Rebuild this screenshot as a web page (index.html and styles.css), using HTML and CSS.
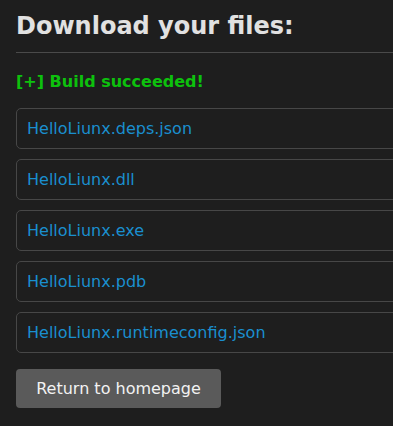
FILE: index.html
```html
<!DOCTYPE html>
<html>
<head>
<meta charset="utf-8">
<link rel="stylesheet" href="styles.css">
</head>
<body>
<main class="page">
  <h1 class="title">Download your files:</h1>
  <hr class="rule">
  <p class="status">[+] Build succeeded!</p>
  <ul class="files">
    <li class="file"><a class="file-link" href="#">HelloLiunx.deps.json</a></li>
    <li class="file"><a class="file-link" href="#">HelloLiunx.dll</a></li>
    <li class="file"><a class="file-link" href="#">HelloLiunx.exe</a></li>
    <li class="file"><a class="file-link" href="#">HelloLiunx.pdb</a></li>
    <li class="file"><a class="file-link" href="#">HelloLiunx.runtimeconfig.json</a></li>
  </ul>
  <button class="home-btn">Return to homepage</button>
</main>
</body>
</html>
```

FILE: styles.css
```css
html, body {
  margin: 0;
  padding: 0;
  background: #1e1e1e;
  overflow: hidden;
}
body {
  font-family: "DejaVu Sans", "Liberation Sans", sans-serif;
  color: #e0e0e0;
}
.page {
  padding: 12px 0 0 16px;
  width: 400px;
}
.title {
  margin: 0;
  font-size: 24px;
  font-weight: bold;
  line-height: 28px;
  color: #e1e1e1;
}
.rule {
  margin: 12px 0 0 0;
  border: 0;
  border-top: 1px solid #4a4a4a;
  height: 0;
}
.status {
  margin: 19px 0 0 0;
  font-size: 16px;
  line-height: 20px;
  font-weight: bold;
  color: #0dc10d;
}
.files {
  list-style: none;
  margin: 16px 0 0 0;
  padding: 0;
  display: flex;
  flex-direction: column;
  gap: 10px;
}
.file {
  border: 1px solid #474747;
  border-radius: 5px;
  height: 39px;
  display: flex;
  align-items: center;
  padding-left: 10px;
}
.file-link {
  font-size: 16px;
  color: #1a8fcf;
  text-decoration: none;
}
.home-btn {
  margin-top: 16px;
  width: 205px;
  height: 39px;
  background: #5a5a5a;
  color: #f2f2f2;
  border: 0;
  border-radius: 4px;
  font-family: "DejaVu Sans", sans-serif;
  font-size: 16px;
  cursor: pointer;
}
```
